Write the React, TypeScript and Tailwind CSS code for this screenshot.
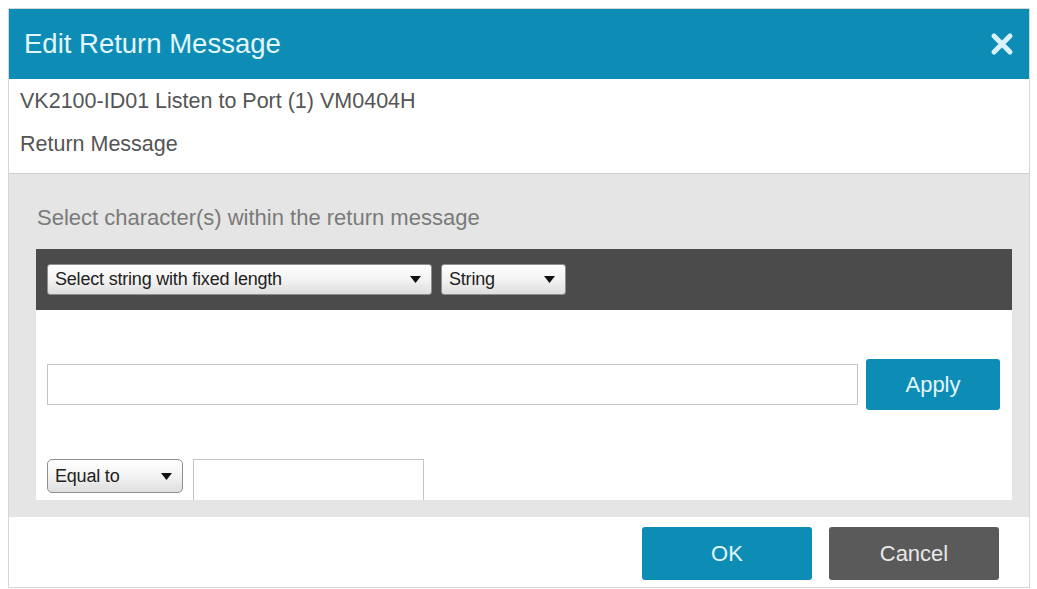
import React from 'react';

function Caret() {
    return (
        <svg className="w-[11px] h-[7px] shrink-0" viewBox="0 0 11 7">
            <path d="M0 0h11L5.5 7z" fill="#111" />
        </svg>
    );
}

function FakeSelect({ label, className }: { label: string; className: string }) {
    return (
        <div
            className={`flex items-center justify-between rounded-[3px] border border-[#8f8f8f] bg-gradient-to-b from-white via-[#f3f3f3] to-[#dedede] pl-[7px] pr-[10px] text-[18px] tracking-[-0.2px] text-[#222] ${className}`}
        >
            <span>{label}</span>
            <Caret />
        </div>
    );
}

export default function App() {
    return (
        <div className="w-full h-[589px] bg-white pt-[8px] pl-[8px] font-['Liberation_Sans',Arial,sans-serif]">
            <div className="w-[1022px] border border-[#d6d6d6] bg-white">
                {/* header */}
                <div className="h-[70px] bg-[#0d8db5] flex items-center justify-between pl-[15px] pr-[15px]">
                    <h1 className="text-[27.5px] text-[#e3f6fb]">Edit Return Message</h1>
                    <svg className="w-[24px] h-[24px]" viewBox="0 0 24 24">
                        <path d="M4 4L20 20M20 4L4 20" stroke="#d8f3fb" strokeWidth={5} strokeLinecap="round" />
                    </svg>
                </div>

                {/* info */}
                <div className="h-[94px] px-[11px] text-[21.5px] text-[#555] flex flex-col">
                    <div className="mt-[10px] leading-[24px]">VK2100-ID01 Listen to Port (1) VM0404H</div>
                    <div className="mt-[19px] leading-[24px]">Return Message</div>
                </div>

                {/* body */}
                <div className="bg-[#e5e5e5] border-t border-[#cfcfcf] pt-[32px] pl-[27px] pr-[17px] pb-[17px]">
                    <div className="text-[22px] leading-[24px] text-[#7a7a7a] pl-[1px]">
                        Select character(s) within the return message
                    </div>

                    <div className="mt-[19px] h-[61px] bg-[#4b4b4b] flex items-center gap-[9px] px-[11px]">
                        <FakeSelect label="Select string with fixed length" className="w-[385px] h-[31px]" />
                        <FakeSelect label="String" className="w-[125px] h-[31px]" />
                    </div>

                    <div className="h-[190px] bg-white px-[11px] pt-[49px] flex flex-col">
                        <div className="flex items-center gap-[8px]">
                            <div className="w-[811px] h-[41px] border border-[#c4c4c4] bg-white" />
                            <button className="w-[134px] h-[51px] rounded-[3px] bg-[#0d8db5] text-[22px] text-[#e3f6fb]">
                                Apply
                            </button>
                        </div>
                        <div className="mt-[49px] flex items-start gap-[10px]">
                            <FakeSelect label="Equal to" className="w-[136px] h-[34px] rounded-[5px]" />
                            <div className="w-[231px] h-[41px] border border-b-0 border-[#c4c4c4] bg-white" />
                        </div>
                    </div>
                </div>

                {/* footer */}
                <div className="h-[70px] flex items-start justify-end gap-[17px] pt-[10px] pr-[30px]">
                    <button className="w-[170px] h-[53px] rounded-[3px] bg-[#0d8db5] text-[22px] text-[#e3f6fb]">
                        OK
                    </button>
                    <button className="w-[170px] h-[53px] rounded-[3px] bg-[#5a5a5a] text-[22px] text-[#e8e8e8]">
                        Cancel
                    </button>
                </div>
            </div>
        </div>
    );
}
